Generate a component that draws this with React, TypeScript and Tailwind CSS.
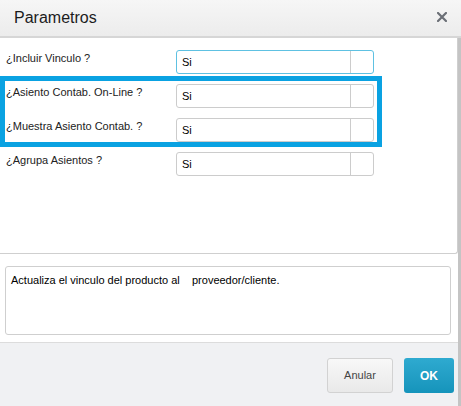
import React from 'react'

const fields = [
    { label: '¿Incluir Vinculo ?', value: 'Si', focused: true },
    { label: '¿Asiento Contab. On-Line ?', value: 'Si', focused: false },
    { label: '¿Muestra Asiento Contab. ?', value: 'Si', focused: false },
    { label: '¿Agrupa Asientos ?', value: 'Si', focused: false },
]

function SelectBox({ value, focused }: { value: string, focused: boolean }) {
    return (
        <div className={`flex w-[198px] h-[24px] rounded-[3px] border bg-white ${focused ? 'border-[#5ec1e2]' : 'border-[#cccccc]'}`}>
            <div className="flex-1 flex items-center pl-[5px] pt-[1px] text-[11px] text-black">{value}</div>
            <div className="w-[23px] border-l border-[#cccccc]" />
        </div>
    )
}

export default function App() {
    return (
        <div className="w-[461px] h-[406px] flex flex-col bg-white overflow-hidden font-['Liberation_Sans',Arial,sans-serif]">
            {/* cabecera */}
            <div className="h-[38px] shrink-0 flex items-center justify-between pl-[14px] pr-[14px] border-b-2 border-[#d6d6d6] bg-gradient-to-b from-[#f6f6f6] to-[#ececec]">
                <span className="text-[16px] text-[#1c1c1c] leading-none -mt-[1px]">Parametros</span>
                <svg width="10" height="10" viewBox="0 0 10 10" className="-mt-[3px]">
                    <path d="M1 1L9 9M9 1L1 9" stroke="#6b6f76" strokeWidth="2.2" strokeLinecap="square" />
                </svg>
            </div>

            <div className="flex-1 flex">
                <div className="w-[458px] flex flex-col">
                    {/* parametros */}
                    <div className="relative h-[216px] shrink-0 border-r border-b border-[#cfcfcf] rounded-br-[3px] pt-[12px] flex flex-col gap-[10px]">
                        {fields.map(f => (
                            <div key={f.label} className="flex items-start">
                                <div className="w-[176px] pl-[6px] pt-[1px] text-[11px] leading-[14px] text-[#222]">{f.label}</div>
                                <SelectBox value={f.value} focused={f.focused} />
                            </div>
                        ))}
                        <div className="absolute left-0 top-[38px] w-[382px] h-[71px] border-[5px] border-[#0aa2e2]" />
                    </div>

                    {/* ayuda */}
                    <div className="mt-[12px] ml-[5px] w-[446px] h-[69px] border border-[#cfcfcf] rounded-[3px] pl-[5px] pt-[6px] text-[11px] leading-[14px] text-black whitespace-pre">
                        {'Actualiza el vinculo del producto al    proveedor/cliente.'}
                    </div>

                    {/* botones */}
                    <div className="mt-auto h-[64px] border-t border-[#dcdcdc] bg-[#f0f1f3] flex justify-end items-start pt-[15px] pr-[4px] gap-[11px]">
                        <button className="w-[66px] h-[35px] rounded-[3px] border border-[#d2d2d2] bg-gradient-to-b from-[#f8f8f8] to-[#e9e9e9] text-[11px] text-[#444]">
                            Anular
                        </button>
                        <button className="w-[50px] h-[35px] rounded-[3px] bg-gradient-to-b from-[#2eaad0] to-[#1594bb] text-[12px] font-bold text-white">
                            OK
                        </button>
                    </div>
                </div>
                <div className="w-[3px] bg-[#c4c4c4]" />
            </div>
        </div>
    )
}
